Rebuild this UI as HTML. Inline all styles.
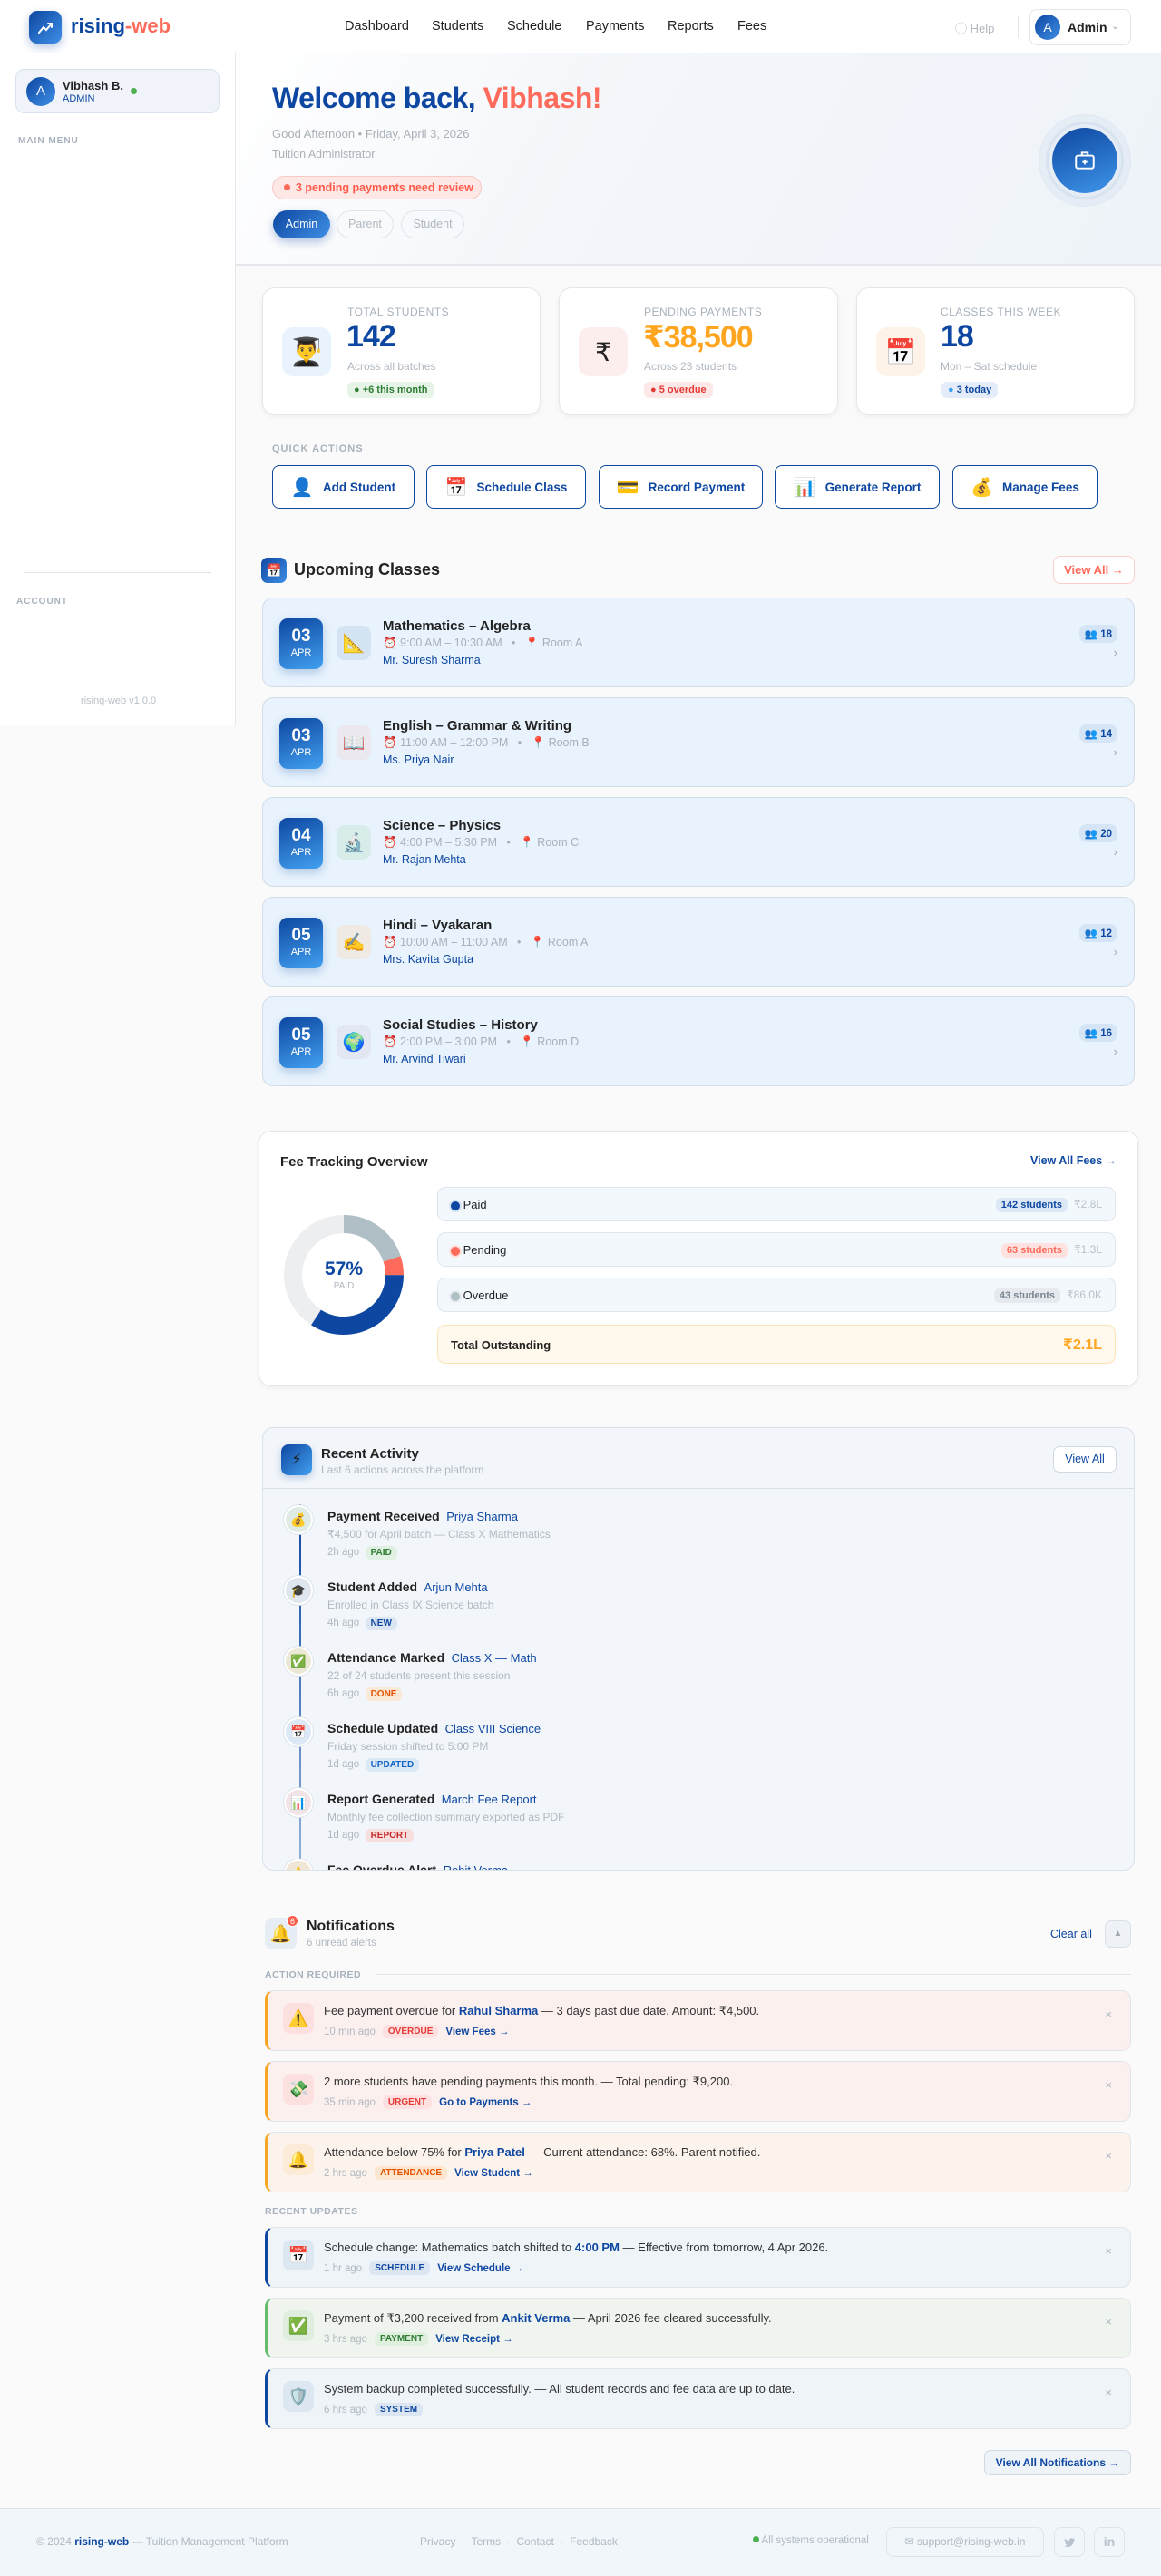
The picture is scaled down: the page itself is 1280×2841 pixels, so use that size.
<!DOCTYPE html>
<html><head><meta charset="utf-8">
<style>
*{box-sizing:border-box;margin:0;padding:0}
body{width:1280px;height:2841px;background:#fafafa;font-family:"Liberation Sans","DejaVu Sans",sans-serif;color:#222;position:relative;overflow:hidden}
.a{position:absolute}
.nav{left:0;top:0;width:1280px;height:59px;background:#fff;border-bottom:1px solid #e3e6ea;box-shadow:0 2px 6px rgba(0,0,0,.04)}
.logo{left:32px;top:12px;width:36px;height:36px;border-radius:9px;background:linear-gradient(135deg,#0d47a1,#3f8fe6);box-shadow:0 4px 10px rgba(13,71,161,.3)}
.navl{top:21px;font-size:14.5px;color:#222}
.side{left:0;top:59px;width:260px;height:741px;background:#fff;border-right:1px solid #e5e7ea}
.hero{left:260px;top:59px;width:1020px;height:234px;background:linear-gradient(120deg,#fff 0%,#f3f6fa 40%,#eef3f9 100%);border-bottom:2px solid #e3e7ec}
.card{background:#fff;border:1px solid #e3e7ec;border-radius:14px;box-shadow:0 2px 6px rgba(0,0,0,.05)}
.lbl{font-size:12px;letter-spacing:.5px;color:#a8b2bd;text-transform:uppercase}
.qa{top:513px;height:48px;border:1.5px solid #0d47a1;border-radius:8px;background:#fff;font-size:13.5px;font-weight:bold;color:#0d47a1;display:flex;align-items:center;justify-content:center;gap:10px}
.qa span{font-size:20px}
.cls{left:289px;width:962px;height:99px;background:#e8f3fd;border:1px solid #cfdde9;border-radius:12px}
.dt{left:18px;top:22px;width:48px;height:56px;border-radius:9px;background:linear-gradient(160deg,#0d47a1,#42a0f0);color:#fff;text-align:center;box-shadow:0 4px 10px rgba(13,71,161,.25)}
.dt b{display:block;font-size:19px;margin-top:9px}
.dt i{display:block;font-style:normal;font-size:11px;margin-top:1px}
.si{left:81px;top:30px;width:38px;height:38px;border-radius:9px;font-size:20px;display:flex;align-items:center;justify-content:center}
.ct{left:132px;top:22px;font-size:15px;font-weight:bold;color:#222}
.cm{left:132px;top:42px;font-size:12.5px;color:#a8b0b8}
.cteach{left:132px;top:61px;font-size:12.5px;color:#0d47a1}
.cnt{right:18px;top:29px;background:#d5e5f5;border-radius:8px;padding:3px 6px;font-size:11.5px;color:#0d47a1;font-weight:bold}
.chev{right:18px;top:52px;color:#a0a8b0;font-size:13px}
.frow{left:482px;width:748px;height:38px;background:#f3f8fd;border:1px solid #dde6ef;border-radius:9px;font-size:13px}
.dot{display:inline-block;width:12px;height:12px;border-radius:50%;vertical-align:middle}
.pill{display:inline-block;border-radius:6px;padding:2px 6px;font-size:11px;font-weight:bold}
.act{left:361px;font-size:14px}
.ai{left:313px;width:32px;height:32px;border-radius:50%;border:2px solid #fff;box-shadow:0 0 0 1px #dbe3ea;display:flex;align-items:center;justify-content:center;font-size:14px}
.nt{left:292px;width:955px;height:67px;border-radius:10px;border:1px solid #e1e4e8;border-left:3px solid #f5a623}
.ni{left:17px;top:13px;width:34px;height:34px;border-radius:8px;display:flex;align-items:center;justify-content:center;font-size:18px}
.ntx{left:62px;top:14px;font-size:13px;color:#333}
.nm{left:62px;top:37px;font-size:11.5px;color:#b0b8c0;display:flex;align-items:center;gap:8px}
.nm a{color:#0d47a1;font-weight:bold;text-decoration:none}
.nx{right:20px;top:18px;color:#b0b8c0;font-size:13px}
.sec{font-size:11.5px;letter-spacing:.5px;color:#a8b2bd;font-weight:bold}
</style></head><body>

<div class="a nav"></div>
<div class="a logo"><svg width="36" height="36" viewBox="0 0 36 36"><path d="M11 24l5-6 3 3 6-7M21 14h4v4" stroke="#fff" stroke-width="2" fill="none" stroke-linecap="round"/></svg></div>
<div class="a" style="left:78px;top:16px;font-size:22px;font-weight:bold;color:#0d47a1">rising<span style="color:#ff6b5b">-web</span></div>
<div class="a navl" style="left:380px">Dashboard</div>
<div class="a navl" style="left:476px">Students</div>
<div class="a navl" style="left:559px">Schedule</div>
<div class="a navl" style="left:646px">Payments</div>
<div class="a navl" style="left:736px">Reports</div>
<div class="a navl" style="left:813px">Fees</div>
<div class="a" style="left:1053px;top:21px;font-size:13px;color:#b0b8c0">ⓘ Help</div>
<div class="a" style="left:1122px;top:18px;width:1px;height:24px;background:#e3e6ea"></div>
<div class="a" style="left:1135px;top:10px;width:112px;height:40px;border:1px solid #e3e6ea;border-radius:8px;background:#fff"></div>
<div class="a" style="left:1141px;top:16px;width:28px;height:28px;border-radius:50%;background:linear-gradient(135deg,#0d47a1,#3f8fe6);color:#fff;font-size:14px;text-align:center;line-height:28px">A</div>
<div class="a" style="left:1177px;top:22px;font-size:14px;font-weight:bold">Admin</div>
<div class="a" style="left:1225px;top:22px;font-size:11px;color:#a0a8b0">⌄</div>

<div class="a side"></div>
<div class="a" style="left:17px;top:76px;width:225px;height:49px;background:#f0f4fa;border:1px solid #d9e2ee;border-radius:10px"></div>
<div class="a" style="left:29px;top:85px;width:32px;height:32px;border-radius:50%;background:linear-gradient(135deg,#0d47a1,#3f8fe6);color:#fff;font-size:15px;text-align:center;line-height:32px">A</div>
<div class="a" style="left:69px;top:87px;font-size:13px;font-weight:bold">Vibhash B.</div>
<div class="a" style="left:69px;top:103px;font-size:11px;color:#0d47a1">ADMIN</div>
<div class="a" style="left:144px;top:97px;width:7px;height:7px;border-radius:50%;background:#4caf50"></div>
<div class="a sec" style="left:20px;top:150px;font-size:10px;letter-spacing:1px">MAIN MENU</div>
<div class="a" style="left:26px;top:631px;width:207px;height:1px;background:#e0e3e7"></div>
<div class="a sec" style="left:18px;top:658px;font-size:10px;letter-spacing:1px">ACCOUNT</div>
<div class="a" style="left:89px;top:767px;font-size:11px;color:#b8c0c8">rising-web v1.0.0</div>

<div class="a hero"></div>
<div class="a" style="left:300px;top:90px;font-size:32px;font-weight:bold;color:#0d47a1;letter-spacing:-.5px">Welcome back, <span style="color:#ff6b5b">Vibhash!</span></div>
<div class="a" style="left:300px;top:140px;font-size:13px;color:#a8b0b8">Good Afternoon • Friday, April 3, 2026</div>
<div class="a" style="left:300px;top:163px;font-size:12.5px;color:#a8b0b8">Tuition Administrator</div>
<div class="a" style="left:300px;top:194px;width:231px;height:26px;border-radius:13px;background:#fde8e6;border:1px solid #f8c9c3;font-size:12.5px;color:#ff5b4b;line-height:24px;padding-left:12px;font-weight:bold"><span style="display:inline-block;width:7px;height:7px;border-radius:50%;background:#ff6b5b;margin-right:6px;vertical-align:1px"></span>3 pending payments need review</div>
<div class="a" style="left:301px;top:232px;width:63px;height:31px;border-radius:16px;background:linear-gradient(135deg,#0d47a1,#3f8fe6);color:#fff;font-size:12.5px;text-align:center;line-height:31px;box-shadow:0 4px 10px rgba(13,71,161,.3)">Admin</div>
<div class="a" style="left:371px;top:232px;width:63px;height:31px;border-radius:16px;border:1px solid #e0e4e8;color:#b0b8c0;font-size:12.5px;text-align:center;line-height:29px">Parent</div>
<div class="a" style="left:442px;top:232px;width:70px;height:31px;border-radius:16px;border:1px solid #e0e4e8;color:#b0b8c0;font-size:12.5px;text-align:center;line-height:29px">Student</div>
<div class="a" style="left:1145px;top:126px;width:102px;height:102px;border-radius:50%;background:rgba(200,215,235,.25);border:1px solid #e1e8f1"></div>
<div class="a" style="left:1153px;top:134px;width:86px;height:86px;border-radius:50%;border:3px solid #d8e3f0"></div>
<div class="a" style="left:1160px;top:141px;width:72px;height:72px;border-radius:50%;background:linear-gradient(160deg,#0d47a1,#3f95ea);display:flex;align-items:center;justify-content:center"><svg width="26" height="26" viewBox="0 0 24 24" fill="none" stroke="#fff" stroke-width="1.8"><rect x="3" y="7" width="18" height="13" rx="2"/><path d="M9 7V4h6v3M12 11v5M9.5 13.5h5"/></svg></div>

<!-- stats -->
<div class="a card" style="left:289px;top:317px;width:307px;height:141px"></div>
<div class="a card" style="left:616px;top:317px;width:308px;height:141px"></div>
<div class="a card" style="left:944px;top:317px;width:307px;height:141px"></div>
<div class="a" style="left:311px;top:361px;width:54px;height:54px;border-radius:12px;background:#e8f3fd;font-size:30px;display:flex;align-items:center;justify-content:center">👨‍🎓</div>
<div class="a" style="left:638px;top:361px;width:54px;height:54px;border-radius:12px;background:#fdeeee;font-size:28px;display:flex;align-items:center;justify-content:center">₹</div>
<div class="a" style="left:966px;top:361px;width:54px;height:54px;border-radius:12px;background:#fdf3e8;font-size:28px;display:flex;align-items:center;justify-content:center">📅</div>
<div class="a lbl" style="left:383px;top:337px">Total Students</div>
<div class="a lbl" style="left:710px;top:337px">Pending Payments</div>
<div class="a lbl" style="left:1037px;top:337px">Classes This Week</div>
<div class="a" style="left:382px;top:352px;font-size:34px;font-weight:bold;color:#0d47a1;letter-spacing:-1px">142</div>
<div class="a" style="left:709px;top:352px;font-size:34px;font-weight:bold;color:#ffa51f;letter-spacing:-1px">₹38,500</div>
<div class="a" style="left:1037px;top:352px;font-size:34px;font-weight:bold;color:#0d47a1;letter-spacing:-1px">18</div>
<div class="a" style="left:383px;top:397px;font-size:12px;color:#b0b8c0">Across all batches</div>
<div class="a" style="left:710px;top:397px;font-size:12px;color:#b0b8c0">Across 23 students</div>
<div class="a" style="left:1037px;top:397px;font-size:12px;color:#b0b8c0">Mon – Sat schedule</div>
<div class="a pill" style="left:383px;top:421px;background:#e6f4e7;color:#2e7d32;padding:3px 7px">● +6 this month</div>
<div class="a pill" style="left:710px;top:421px;background:#fde8e8;color:#e53935;padding:3px 7px">● 5 overdue</div>
<div class="a pill" style="left:1038px;top:421px;background:#e3ecf8;color:#0d47a1;padding:3px 7px"><span style="color:#42a0f0">●</span> 3 today</div>

<div class="a sec" style="left:300px;top:489px;font-size:11px;letter-spacing:1px">QUICK ACTIONS</div>
<div class="a qa" style="left:300px;width:157px"><span>👤</span>Add Student</div>
<div class="a qa" style="left:470px;width:176px"><span>📅</span>Schedule Class</div>
<div class="a qa" style="left:660px;width:181px"><span>💳</span>Record Payment</div>
<div class="a qa" style="left:854px;width:182px"><span>📊</span>Generate Report</div>
<div class="a qa" style="left:1050px;width:160px"><span>💰</span>Manage Fees</div>

<!-- upcoming -->
<div class="a" style="left:288px;top:615px;width:28px;height:28px;border-radius:7px;background:linear-gradient(135deg,#0d47a1,#3f8fe6);font-size:14px;display:flex;align-items:center;justify-content:center">📅</div>
<div class="a" style="left:324px;top:618px;font-size:18px;font-weight:bold">Upcoming Classes</div>
<div class="a" style="left:1161px;top:613px;width:90px;height:31px;border:1px solid #fbd0ca;border-radius:8px;background:#fff;color:#ff6b5b;font-size:13px;font-weight:bold;text-align:center;line-height:29px">View All →</div>

<div class="a cls" style="top:659px"><div class="a dt"><b>03</b><i>APR</i></div><div class="a si" style="background:#d5e4f3">📐</div><div class="a ct">Mathematics – Algebra</div><div class="a cm">⏰ 9:00 AM – 10:30 AM &nbsp; • &nbsp; 📍 Room A</div><div class="a cteach">Mr. Suresh Sharma</div><div class="a cnt">👥 18</div><div class="a chev">›</div></div>
<div class="a cls" style="top:769px"><div class="a dt"><b>03</b><i>APR</i></div><div class="a si" style="background:#ebe8ef">📖</div><div class="a ct">English – Grammar &amp; Writing</div><div class="a cm">⏰ 11:00 AM – 12:00 PM &nbsp; • &nbsp; 📍 Room B</div><div class="a cteach">Ms. Priya Nair</div><div class="a cnt">👥 14</div><div class="a chev">›</div></div>
<div class="a cls" style="top:879px"><div class="a dt"><b>04</b><i>APR</i></div><div class="a si" style="background:#d8ecea">🔬</div><div class="a ct">Science – Physics</div><div class="a cm">⏰ 4:00 PM – 5:30 PM &nbsp; • &nbsp; 📍 Room C</div><div class="a cteach">Mr. Rajan Mehta</div><div class="a cnt">👥 20</div><div class="a chev">›</div></div>
<div class="a cls" style="top:989px"><div class="a dt"><b>05</b><i>APR</i></div><div class="a si" style="background:#efeae3">✍️</div><div class="a ct">Hindi – Vyakaran</div><div class="a cm">⏰ 10:00 AM – 11:00 AM &nbsp; • &nbsp; 📍 Room A</div><div class="a cteach">Mrs. Kavita Gupta</div><div class="a cnt">👥 12</div><div class="a chev">›</div></div>
<div class="a cls" style="top:1099px"><div class="a dt"><b>05</b><i>APR</i></div><div class="a si" style="background:#e3e6f3">🌍</div><div class="a ct">Social Studies – History</div><div class="a cm">⏰ 2:00 PM – 3:00 PM &nbsp; • &nbsp; 📍 Room D</div><div class="a cteach">Mr. Arvind Tiwari</div><div class="a cnt">👥 16</div><div class="a chev">›</div></div>

<!-- fee -->
<div class="a card" style="left:285px;top:1247px;width:970px;height:282px"></div>
<div class="a" style="left:309px;top:1273px;font-size:15px;font-weight:bold">Fee Tracking Overview</div>
<div class="a" style="left:1136px;top:1273px;font-size:12.5px;font-weight:bold;color:#0d47a1">View All Fees →</div>
<svg class="a" style="left:313px;top:1340px" width="132" height="132" viewBox="0 0 132 132">
<g transform="rotate(-90 66 66)" fill="none" stroke-width="20">
<circle cx="66" cy="66" r="56" stroke="#eceef0"/>
<circle cx="66" cy="66" r="56" stroke="#0d47a1" stroke-dasharray="120 352" stroke-dashoffset="-88"/>
<circle cx="66" cy="66" r="56" stroke="#b0bec5" stroke-dasharray="70 352" stroke-dashoffset="0"/>
<circle cx="66" cy="66" r="56" stroke="#ff6b5b" stroke-dasharray="18 352" stroke-dashoffset="-70"/>
</g></svg>
<div class="a" style="left:339px;top:1388px;width:80px;text-align:center;font-size:21px;font-weight:bold;color:#0d47a1">57%</div>
<div class="a" style="left:339px;top:1413px;width:80px;text-align:center;font-size:10px;color:#b0b8c0">PAID</div>
<div class="a frow" style="top:1309px"><div class="a" style="left:14px;top:11px"><span class="dot" style="width:10px;height:10px;background:#0d47a1;box-shadow:0 0 0 2px #d5e2f3"></span> Paid</div><div class="a" style="right:14px;top:10px"><span class="pill" style="background:#dce8f5;color:#0d47a1">142 students</span> <span style="color:#b8c0c8;font-size:12px">&nbsp;₹2.8L</span></div></div>
<div class="a frow" style="top:1359px"><div class="a" style="left:14px;top:11px"><span class="dot" style="width:10px;height:10px;background:#ff6b5b;box-shadow:0 0 0 2px #fde0dc"></span> Pending</div><div class="a" style="right:14px;top:10px"><span class="pill" style="background:#fde2e0;color:#ff6b5b">63 students</span> <span style="color:#b8c0c8;font-size:12px">&nbsp;₹1.3L</span></div></div>
<div class="a frow" style="top:1409px"><div class="a" style="left:14px;top:11px"><span class="dot" style="width:10px;height:10px;background:#b0bec5;box-shadow:0 0 0 2px #e8ecef"></span> Overdue</div><div class="a" style="right:14px;top:10px"><span class="pill" style="background:#e6eaee;color:#78848f">43 students</span> <span style="color:#b8c0c8;font-size:12px">&nbsp;₹86.0K</span></div></div>
<div class="a" style="left:482px;top:1461px;width:748px;height:43px;background:#fff8ec;border:1px solid #fbe3b6;border-radius:9px"><div class="a" style="left:14px;top:14px;font-size:13px;font-weight:bold">Total Outstanding</div><div class="a" style="right:14px;top:11px;font-size:16px;font-weight:bold;color:#ffa51f">₹2.1L</div></div>

<!-- activity -->
<div class="a" style="left:289px;top:1574px;width:962px;height:489px;background:#f2f6fa;border:1px solid #d9e1e9;border-radius:12px;overflow:hidden">
<div class="a" style="left:0;top:66px;width:962px;height:1px;background:#d6dee6"></div>
<div class="a" style="left:20px;top:18px;width:34px;height:34px;border-radius:8px;background:linear-gradient(135deg,#0d47a1,#42a0f0);font-size:17px;display:flex;align-items:center;justify-content:center;box-shadow:0 3px 8px rgba(13,71,161,.25)">⚡</div>
<div class="a" style="left:64px;top:20px;font-size:15px;font-weight:bold">Recent Activity</div>
<div class="a" style="left:64px;top:39px;font-size:12px;color:#b0b8c0">Last 6 actions across the platform</div>
<div class="a" style="left:871px;top:20px;width:70px;height:29px;border:1px solid #cfd9e4;border-radius:7px;background:#fff;font-size:12.5px;color:#0d47a1;text-align:center;line-height:27px">View All</div>
<div class="a" style="left:40px;top:84px;width:2px;height:420px;background:linear-gradient(#0d47a1,#9ab8dc)"></div>
</div>
<div class="a ai" style="top:1660px;background:#dfece6">💰</div>
<div class="a ai" style="top:1738px;background:#dfe6ee">🎓</div>
<div class="a ai" style="top:1816px;background:#ece8d6">✅</div>
<div class="a ai" style="top:1894px;background:#dce8f5">📅</div>
<div class="a ai" style="top:1972px;background:#f2e4e6">📊</div>
<div class="a ai" style="top:2050px;background:#efe6d6;clip-path:inset(0 0 62% 0)">⚠️</div>
<div class="a act" style="top:1664px"><b>Payment Received</b> <span style="color:#0d47a1;font-size:13px">&nbsp;Priya Sharma</span><div style="font-size:12px;color:#b0b8c0;margin-top:5px">₹4,500 for April batch — Class X Mathematics</div><div style="font-size:11.5px;color:#b0b8c0;margin-top:6px">2h ago &nbsp;<span class="pill" style="background:#e0f0e2;color:#2e7d32;font-size:10px">PAID</span></div></div>
<div class="a act" style="top:1742px"><b>Student Added</b> <span style="color:#0d47a1;font-size:13px">&nbsp;Arjun Mehta</span><div style="font-size:12px;color:#b0b8c0;margin-top:5px">Enrolled in Class IX Science batch</div><div style="font-size:11.5px;color:#b0b8c0;margin-top:6px">4h ago &nbsp;<span class="pill" style="background:#dce6f2;color:#0d47a1;font-size:10px">NEW</span></div></div>
<div class="a act" style="top:1820px"><b>Attendance Marked</b> <span style="color:#0d47a1;font-size:13px">&nbsp;Class X — Math</span><div style="font-size:12px;color:#b0b8c0;margin-top:5px">22 of 24 students present this session</div><div style="font-size:11.5px;color:#b0b8c0;margin-top:6px">6h ago &nbsp;<span class="pill" style="background:#fbe9d8;color:#e65100;font-size:10px">DONE</span></div></div>
<div class="a act" style="top:1898px"><b>Schedule Updated</b> <span style="color:#0d47a1;font-size:13px">&nbsp;Class VIII Science</span><div style="font-size:12px;color:#b0b8c0;margin-top:5px">Friday session shifted to 5:00 PM</div><div style="font-size:11.5px;color:#b0b8c0;margin-top:6px">1d ago &nbsp;<span class="pill" style="background:#dbe9f7;color:#1565c0;font-size:10px">UPDATED</span></div></div>
<div class="a act" style="top:1976px"><b>Report Generated</b> <span style="color:#0d47a1;font-size:13px">&nbsp;March Fee Report</span><div style="font-size:12px;color:#b0b8c0;margin-top:5px">Monthly fee collection summary exported as PDF</div><div style="font-size:11.5px;color:#b0b8c0;margin-top:6px">1d ago &nbsp;<span class="pill" style="background:#f7dfe0;color:#c62828;font-size:10px">REPORT</span></div></div>
<div class="a act" style="top:2054px;height:8px;overflow:hidden"><b>Fee Overdue Alert</b> <span style="color:#0d47a1;font-size:13px">&nbsp;Rohit Verma</span></div>

<!-- notifications -->
<div class="a" style="left:292px;top:2115px;width:35px;height:35px;border-radius:8px;background:#e6edf4;font-size:19px;display:flex;align-items:center;justify-content:center">🔔</div>
<div class="a" style="left:316px;top:2112px;width:13px;height:13px;border-radius:50%;background:#ff5b4b;color:#fff;font-size:9px;text-align:center;line-height:13px;border:1px solid #fff">6</div>
<div class="a" style="left:338px;top:2116px;font-size:16px;font-weight:bold">Notifications</div>
<div class="a" style="left:338px;top:2137px;font-size:11.5px;color:#b0b8c0">6 unread alerts</div>
<div class="a" style="left:1158px;top:2126px;font-size:12.5px;color:#0d47a1">Clear all</div>
<div class="a" style="left:1218px;top:2118px;width:29px;height:30px;border:1px solid #d9e0e7;border-radius:7px;background:#eef2f6;color:#a0a8b0;font-size:10px;text-align:center;line-height:28px">▲</div>
<div class="a sec" style="left:292px;top:2172px;font-size:10.5px">ACTION REQUIRED</div>
<div class="a" style="left:414px;top:2177px;width:833px;height:1px;background:#e0e4e8"></div>
<div class="a nt" style="top:2195px;background:#fcf0ef"><div class="a ni" style="background:#fbe0df">⚠️</div><div class="a ntx">Fee payment overdue for <b style="color:#0d47a1">Rahul Sharma</b> — 3 days past due date. Amount: ₹4,500.</div><div class="a nm">10 min ago <span class="pill" style="background:#fde0df;color:#e53935;font-size:10px">OVERDUE</span><a>View Fees →</a></div><div class="a nx">×</div></div>
<div class="a nt" style="top:2273px;background:#fcf0ef"><div class="a ni" style="background:#fbe0df">💸</div><div class="a ntx">2 more students have pending payments this month. — Total pending: ₹9,200.</div><div class="a nm">35 min ago <span class="pill" style="background:#fde0df;color:#e53935;font-size:10px">URGENT</span><a>Go to Payments →</a></div><div class="a nx">×</div></div>
<div class="a nt" style="top:2351px;background:#fcf3ec"><div class="a ni" style="background:#fcebd6">🔔</div><div class="a ntx">Attendance below 75% for <b style="color:#0d47a1">Priya Patel</b> — Current attendance: 68%. Parent notified.</div><div class="a nm">2 hrs ago <span class="pill" style="background:#fde6cf;color:#e65100;font-size:10px">ATTENDANCE</span><a>View Student →</a></div><div class="a nx">×</div></div>
<div class="a sec" style="left:292px;top:2433px;font-size:10.5px">RECENT UPDATES</div>
<div class="a" style="left:410px;top:2438px;width:837px;height:1px;background:#e0e4e8"></div>
<div class="a nt" style="top:2456px;background:#eff4f9;border-left-color:#0d47a1"><div class="a ni" style="background:#dde7f1">📅</div><div class="a ntx">Schedule change: Mathematics batch shifted to <b style="color:#0d47a1">4:00 PM</b> — Effective from tomorrow, 4 Apr 2026.</div><div class="a nm">1 hr ago <span class="pill" style="background:#dce6f2;color:#0d47a1;font-size:10px">SCHEDULE</span><a>View Schedule →</a></div><div class="a nx">×</div></div>
<div class="a nt" style="top:2534px;background:#eff5ee;border-left-color:#66bb6a"><div class="a ni" style="background:#e0eedf">✅</div><div class="a ntx">Payment of ₹3,200 received from <b style="color:#0d47a1">Ankit Verma</b> — April 2026 fee cleared successfully.</div><div class="a nm">3 hrs ago <span class="pill" style="background:#dff0df;color:#2e7d32;font-size:10px">PAYMENT</span><a>View Receipt →</a></div><div class="a nx">×</div></div>
<div class="a nt" style="top:2612px;background:#eff4f9;border-left-color:#0d47a1"><div class="a ni" style="background:#dde7f1">🛡️</div><div class="a ntx">System backup completed successfully. — All student records and fee data are up to date.</div><div class="a nm">6 hrs ago <span class="pill" style="background:#dce6f2;color:#0d47a1;font-size:10px">SYSTEM</span></div><div class="a nx">×</div></div>
<div class="a" style="left:1085px;top:2702px;width:162px;height:28px;border:1px solid #cfd9e4;border-radius:7px;background:#eef3f8;color:#0d47a1;font-size:12px;font-weight:bold;text-align:center;line-height:26px">View All Notifications →</div>

<!-- footer -->
<div class="a" style="left:0;top:2766px;width:1280px;height:75px;background:#f1f6fb;border-top:1px solid #dfe4e9"></div>
<div class="a" style="left:40px;top:2796px;font-size:12px;color:#b0b8c0">© 2024 <b style="color:#0d47a1">rising-web</b> — Tuition Management Platform</div>
<div class="a" style="left:463px;top:2796px;font-size:12px;color:#b0b8c0">Privacy &nbsp;·&nbsp; Terms &nbsp;·&nbsp; Contact &nbsp;·&nbsp; Feedback</div>
<div class="a" style="left:830px;top:2796px;font-size:11.5px;color:#b0b8c0"><span style="display:inline-block;width:7px;height:7px;border-radius:50%;background:#4caf50;vertical-align:1px"></span> All systems operational</div>
<div class="a" style="left:977px;top:2787px;width:174px;height:33px;border:1px solid #dde4ea;border-radius:8px;font-size:12px;color:#b0b8c0;text-align:center;line-height:31px">✉ support@rising-web.in</div>
<div class="a" style="left:1162px;top:2787px;width:34px;height:33px;border:1px solid #dde4ea;border-radius:8px;display:flex;align-items:center;justify-content:center"><svg width="14" height="14" viewBox="0 0 24 24" fill="#b8c2cc"><path d="M22 5.8c-.7.3-1.5.5-2.4.6.9-.5 1.5-1.3 1.8-2.3-.8.5-1.7.8-2.6 1-1.6-1.7-4.4-1.6-6 .2-.9 1-1.2 2.4-.9 3.7-3.300-.2-6.3-1.7-8.4-4.3-1.1 1.9-.5 4.3 1.3 5.5-.6 0-1.3-.2-1.8-.5 0 2 1.4 3.7 3.3 4.1-.6.2-1.3.2-1.9.1.5 1.7 2.1 2.8 3.9 2.9-1.7 1.3-3.9 2-6.1 1.8 1.9 1.2 4.1 1.9 6.4 1.9 7.7 0 12-6.5 11.900-12.2.8-.6 1.5-1.4 2.1-2.2z"/></svg></div>
<div class="a" style="left:1206px;top:2787px;width:34px;height:33px;border:1px solid #dde4ea;border-radius:8px;font-size:14px;font-weight:bold;color:#b8c2cc;text-align:center;line-height:31px">in</div>
</body></html>
